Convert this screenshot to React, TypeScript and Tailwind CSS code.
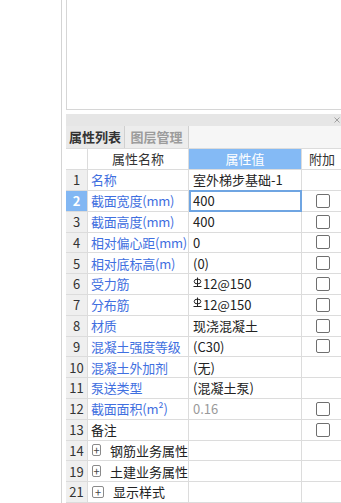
const font = { fontFamily: '"Noto Sans CJK SC", "Noto Sans", sans-serif' };

type Row = {
  no: string;
  name: string;
  value?: string;
  rebar?: boolean;
  blue?: boolean;
  check?: boolean;
  group?: boolean;
  grayValue?: boolean;
  selected?: boolean;
};

const rows: Row[] = [
  { no: '1', name: '名称', value: '室外梯步基础-1', blue: true },
  { no: '2', name: '截面宽度(mm)', value: '400', blue: true, check: true, selected: true },
  { no: '3', name: '截面高度(mm)', value: '400', blue: true, check: true },
  { no: '4', name: '相对偏心距(mm)', value: '0', blue: true, check: true },
  { no: '5', name: '相对底标高(m)', value: '(0)', blue: true, check: true },
  { no: '6', name: '受力筋', value: '12@150', rebar: true, blue: true, check: true },
  { no: '7', name: '分布筋', value: '12@150', rebar: true, blue: true, check: true },
  { no: '8', name: '材质', value: '现浇混凝土', blue: true, check: true },
  { no: '9', name: '混凝土强度等级', value: '(C30)', blue: true, check: true },
  { no: '10', name: '混凝土外加剂', value: '(无)', blue: true },
  { no: '11', name: '泵送类型', value: '(混凝土泵)', blue: true },
  { no: '12', name: '截面面积(m²)', value: '0.16', blue: true, check: true, grayValue: true },
  { no: '13', name: '备注', value: '', check: true },
  { no: '14', name: '钢筋业务属性', group: true },
  { no: '19', name: '土建业务属性', group: true },
  { no: '21', name: '显示样式', group: true },
];

const RebarMark = () => (
  <svg width="9" height="10" viewBox="0 0 9 10" className="mr-[1px] -mt-[5px]">
    <path d="M4.5 0.5 V9.5 M0.5 9.5 H8.5" stroke="#222" strokeWidth="1" fill="none" />
    <ellipse cx="4.5" cy="4.5" rx="3.3" ry="2.4" stroke="#222" strokeWidth="1" fill="none" />
  </svg>
);

const Check = () => (
  <span className="block w-[14px] h-[14px] rounded-[2px] border border-[#6f6f6f] bg-white" />
);

const PlusBox = () => (
  <span className="w-[12px] h-[12px] rounded-[2px] border border-[#8a8a8a] flex items-center justify-center text-[11px] leading-none text-[#444] mr-[9px]">
    +
  </span>
);

const TableRow = ({ r }: { r: Row }) => (
  <div className="flex h-[21px] border-b border-[#dcdcdc] text-[13px]">
    <div
      className={`w-[22px] shrink-0 flex items-center justify-center border-r border-[#dcdcdc] ${
        r.selected ? 'bg-[#82b7f3] text-white font-bold' : 'bg-[#efefef] text-[#333]'
      }`}
    >
      {r.no}
    </div>
    {r.group ? (
      <div className="w-[101px] shrink-0 flex items-center pl-[4px] text-[#222] border-r border-[#dcdcdc] whitespace-nowrap">
        <PlusBox />
        {r.name}
      </div>
    ) : (
      <div
        className={`w-[101px] shrink-0 flex items-center pl-[3px] border-r border-[#dcdcdc] whitespace-nowrap tracking-[-0.2px] ${
          r.blue ? 'text-[#3f6fe0]' : 'text-[#222]'
        }`}
      >
        {r.name}
      </div>
    )}
    <div
      className={`w-[113px] shrink-0 flex items-center whitespace-nowrap ${
        r.selected ? 'border-2 border-[#6fa5e2] pl-[2px] -my-[1px] h-[22px]' : 'pl-[4px] border-r border-[#dcdcdc]'
      } ${r.grayValue ? 'text-[#9a9a9a]' : 'text-[#222]'}`}
    >
      {r.rebar && <RebarMark />}
      {r.value}
    </div>
    <div className="flex-1 flex items-center pl-[14px]">{r.check && <Check />}</div>
  </div>
);

export default function App() {
  return (
    <div className="w-[341px] h-[503px] bg-white flex overflow-hidden" style={font}>
      <div className="w-[62px] shrink-0 border-r border-[#d4d4d4]" />
      <div className="w-[4px] shrink-0" />
      <div className="flex-1 flex flex-col min-w-0">
        <div className="h-[110px] shrink-0 border-l border-b border-[#d6d6d6] bg-white" />
        <div className="h-[4px] shrink-0" />
        <div className="h-[12px] shrink-0 bg-[#e6e6e6] flex justify-end items-center pr-[1px]">
          <svg width="6" height="6" viewBox="0 0 6 6">
            <path d="M0.5 0.5 L5.5 5.5 M5.5 0.5 L0.5 5.5" stroke="#a0a0a0" strokeWidth="1" />
          </svg>
        </div>
        <div className="h-[23px] shrink-0 flex bg-[#f6f6f6] border-b border-[#dcdcdc]">
          <div className="w-[59px] flex items-center justify-center bg-[#e9e9e9] border-r border-[#d0d0d0] text-[13px] font-bold text-[#333]">
            属性列表
          </div>
          <div className="w-[64px] flex items-center justify-center bg-[#ededed] border-r border-[#d0d0d0] text-[13px] font-bold text-[#9c9c9c]">
            图层管理
          </div>
        </div>
        <div className="flex h-[21px] shrink-0 border-b border-[#dcdcdc] text-[13px]">
          <div className="w-[22px] shrink-0 border-r border-[#dcdcdc] bg-white" />
          <div className="w-[101px] shrink-0 flex items-center justify-center border-r border-[#dcdcdc] text-[#333]">
            属性名称
          </div>
          <div className="w-[113px] shrink-0 flex items-center justify-center bg-[#84baf5] text-white border-r border-[#dcdcdc]">
            属性值
          </div>
          <div className="flex-1 flex items-center pl-[7px] text-[#333] whitespace-nowrap">附加</div>
        </div>
        {rows.map((r) => (
          <TableRow key={r.no} r={r} />
        ))}
      </div>
    </div>
  );
}
